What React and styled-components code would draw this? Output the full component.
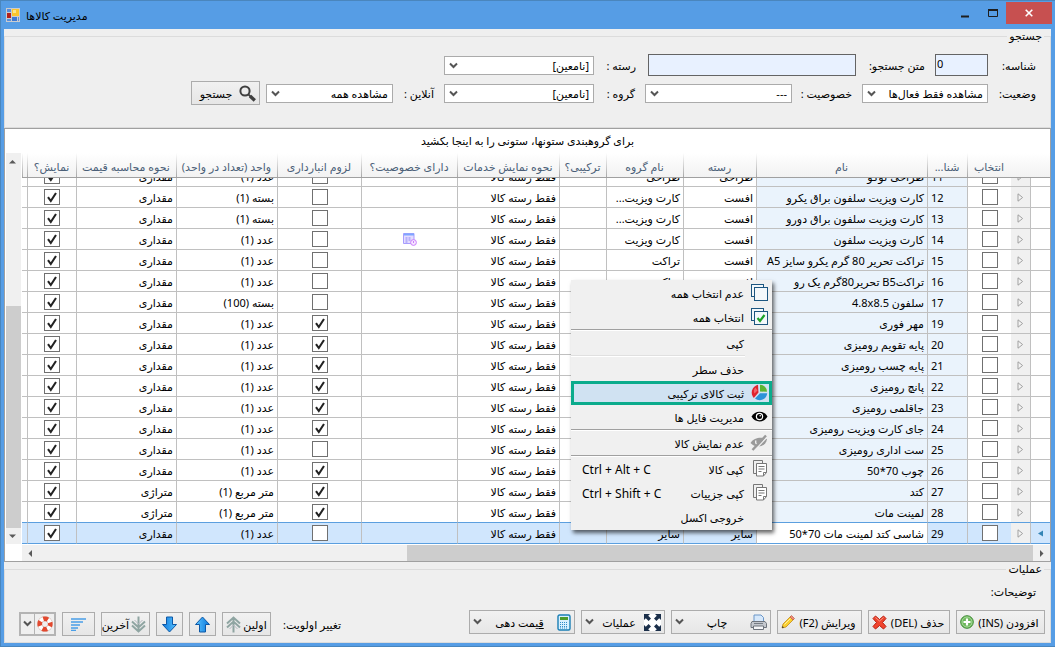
import React, { useState } from 'react';
import styled, { createGlobalStyle, css } from 'styled-components';

const GlobalStyle = createGlobalStyle`
  * {
    box-sizing: border-box;
  }
  body {
    margin: 0;
    overflow: hidden;
    font-family: 'Noto Sans', 'DejaVu Sans', sans-serif;
    font-size: 11px;
    color: #000000;
  }
  button, input, select {
    font: inherit;
    color: inherit;
  }
  svg {
    flex-shrink: 0;
  }
`;

const Window = styled.div`
  height: 100vh;
  display: flex;
  flex-direction: column;
  background-color: #569de5;
  border: 1px solid #4a86bd;
  border-right-width: 0;
  padding: 0 4px 3px 3px;
`;

const TitleBar = styled.header`
  height: 28px;
  flex-shrink: 0;
  display: flex;
  align-items: center;
  padding-left: 2px;
  margin-right: -1px;
`;

const Title = styled.h1`
  flex: 1;
  margin: 0 0 0 6px;
  font-size: 11px;
  font-weight: 400;
`;

const WindowButton = styled.button`
  width: ${(props) => (props.$close ? '46px' : '27px')};
  height: 22px;
  align-self: flex-start;
  display: flex;
  align-items: center;
  justify-content: center;
  padding: 0;
  border: none;
  margin-top: 1px;
  background-color: ${(props) => (props.$close ? '#c75050' : 'transparent')};
`;

const Content = styled.main`
  flex: 1;
  min-height: 0;
  display: flex;
  flex-direction: column;
  direction: rtl;
  background-color: #efefef;
`;

const Group = styled.fieldset`
  flex-shrink: 0;
  min-width: 0;
  margin: 0;
  padding: 8px 14px ${(props) => props.$bottom};
  border: 1px solid #dcdcdc;
`;

const Legend = styled.legend`
  height: 14px;
  line-height: 14px;
  padding: 0 2px;
  margin-right: -8px;
`;

const FieldRow = styled.div`
  display: flex;
  align-items: center;
  gap: 10px;
  height: 28px;
`;

const Field = styled.div`
  display: flex;
  align-items: center;
  gap: ${(props) => props.$gap || '0'};
`;

const Label = styled.label`
  width: ${(props) => props.$width};
  white-space: nowrap;
`;

const TextInput = styled.input`
  width: ${(props) => props.$width};
  height: 22px;
  padding: 0 1px 3px;
  border: 1px solid #646464;
  border-radius: 0;
  background-color: #e8f1ff;
  text-align: left;
  direction: ltr;
`;

const SelectBox = styled.div`
  position: relative;
  width: ${(props) => props.$width};
  height: 19px;

  svg {
    position: absolute;
    left: 5px;
    top: 6px;
    pointer-events: none;
  }
`;

const Select = styled.select`
  width: 100%;
  height: 100%;
  padding: 0 4px 0 16px;
  appearance: none;
  border: 1px solid #ababab;
  border-radius: 0;
  background-color: #ffffff;
`;

const Button = styled.button`
  width: ${(props) => props.$width};
  height: 24px;
  display: flex;
  align-items: center;
  justify-content: ${(props) => (props.$center ? 'center' : 'space-between')};
  gap: 2px;
  padding: 0 3px;
  border: 1px solid #acacac;
  background-image: linear-gradient(#f1f1f1, #e6e6e6);
  white-space: nowrap;
`;

const ButtonText = styled.span`
  flex: 1;
  text-align: center;
`;

const GridPanel = styled.section`
  position: relative;
  flex: 1;
  min-height: 0;
  display: flex;
  flex-direction: column;
  border: 1px solid #a0a0a0;
  background-color: #ffffff;
`;

const GroupHint = styled.div`
  height: 24px;
  line-height: 24px;
  flex-shrink: 0;
  text-align: center;
`;

const GridArea = styled.div`
  flex: 1;
  min-height: 0;
  display: flex;
`;

const GridMain = styled.div`
  flex: 1;
  min-width: 0;
  display: flex;
  flex-direction: column;
`;

const BodyView = styled.div`
  flex: 1;
  min-height: 0;
  overflow: hidden;
  display: flex;
  flex-direction: column;
  justify-content: flex-end;
`;

const Table = styled.table`
  width: 100%;
  table-layout: fixed;
  border-collapse: separate;
  border-spacing: 0;
`;

const HeadCell = styled.th`
  height: 25px;
  padding: 2px 0 0;
  overflow: hidden;
  white-space: nowrap;
  font-weight: 400;
  color: #4b5f78;
  border-bottom: 1px solid #a0a0a0;
  background: ${(props) =>
    props.$plain
      ? 'linear-gradient(#ffffff, #f2f2f2)'
      : 'linear-gradient(#ffffff, #a8a8a8) left / 1px 100% no-repeat, linear-gradient(#ffffff, #f2f2f2)'};
`;

const Row = styled.tr`
  background-color: ${(props) => (props.$selected ? '#d0e6fd' : '#ffffff')};
`;

const Cell = styled.td`
  height: 21px;
  padding: 0 3px;
  overflow: hidden;
  white-space: nowrap;
  border-left: ${(props) => (props.$noLine ? 'none' : '1px solid #c0c0c0')};
  border-bottom: 1px solid ${(props) => (props.$line ? '#5b9fdf' : '#c0c0c0')};
  text-align: ${(props) => props.$align || 'right'};
  ${(props) =>
    props.$tint &&
    css`
      background-color: ${props.$tint};
    `}

  svg {
    display: block;
    margin: 0 auto;
  }
`;

const CheckBox = styled.input`
  appearance: none;
  display: block;
  width: 16px;
  height: 16px;
  margin: 0 auto;
  border: 1px solid #707070;
  background-color: #ffffff;

  &:checked {
    background-image: url("data:image/svg+xml,%3Csvg xmlns='http://www.w3.org/2000/svg' viewBox='0 0 14 14'%3E%3Cpath d='M3 7.2 5.8 11 11 3' fill='none' stroke='%23222' stroke-width='2.1'/%3E%3C/svg%3E");
  }
`;

const VScroll = styled.div`
  width: 15px;
  margin: 0 1px 17px;
  display: flex;
  flex-direction: column;
  background-color: #f0f0f0;
`;

const HScroll = styled.div`
  height: 16px;
  margin-top: 1px;
  flex-shrink: 0;
  display: flex;
  direction: ltr;
  background-color: #f0f0f0;
`;

const ScrollButton = styled.button`
  width: 17px;
  height: 16px;
  flex-shrink: 0;
  display: flex;
  align-items: center;
  justify-content: center;
  padding: 0;
  border: none;
  background: none;
`;

const Space = styled.div`
  flex: ${(props) => props.$grow};
`;

const Thumb = styled.div`
  flex: ${(props) => props.$grow};
  background-color: #cdcdcd;
`;

const Menu = styled.ul`
  position: absolute;
  left: 566px;
  top: 151px;
  width: 201px;
  margin: 0;
  padding: 1px 0;
  list-style: none;
  background-color: #f0f0f0;
  box-shadow: 2px 3px 4px rgba(0, 0, 0, 0.6);
`;

const MenuSeparator = styled.li`
  height: 2px;
  margin-right: ${(props) => (props.$light ? '27px' : '0')};
  border-top: 1px solid ${(props) => (props.$light ? '#e0e0e0' : '#a0a0a0')};
  border-bottom: 1px solid #ffffff;
`;

const MenuButton = styled.button`
  width: 100%;
  height: 24px;
  display: flex;
  align-items: center;
  padding: 0 4px 0 11px;
  border: none;
  background: none;
  ${(props) =>
    props.$active &&
    css`
      background-color: #d0e2f2;
      outline: 3px solid #0bab8c;
      outline-offset: -3px;
    `}
`;

const MenuIcon = styled.span`
  width: 18px;
  height: 18px;
  margin-left: 6px;
`;

const MenuText = styled.span`
  flex: 1;
  text-align: right;
`;

const Shortcut = styled.kbd`
  font-family: inherit;
  font-size: 12px;
  direction: ltr;
`;

const Notes = styled.p`
  height: 16px;
  line-height: 16px;
  margin: 0 0 9px;
`;

const Toolbar = styled.div`
  display: flex;
  align-items: center;
  gap: 6px;
  height: 26px;
  margin: 0 -9px;
`;

const ToolSpace = styled.div`
  flex: 1;
`;

const OrderTools = styled.div`
  display: flex;
  align-items: center;
  gap: 6px;
  padding-top: 4px;
  padding-left: 9px;
`;

const OrderLabel = styled.span`
  margin-left: 6px;
`;

const SplitButton = styled.div`
  display: flex;
  width: 37px;
  height: 24px;
  border: 2px solid #b4b4b4;

  button {
    padding: 0;
    border: none;
    background-color: #efefef;
    display: flex;
    align-items: center;
    justify-content: center;
    height: 20px;
  }
  button:first-child {
    flex: 1;
  }
  button:last-child {
    width: 14px;
    border-right: 1px solid #b4b4b4;
  }
`;

const Chevron = () => (
  <svg width='9' height='8' viewBox='0 0 9 8'>
    <path d='M1 1.5 4.5 5 8 1.5' fill='none' stroke='#555' strokeWidth='2' />
  </svg>
);

const AppIcon = () => (
  <svg width='14' height='14' viewBox='0 0 14 14'>
    <rect width='14' height='14' fill='#c9ccd0' />
    <rect x='1' y='1' width='4' height='3' fill='#5a8edb' />
    <rect x='1' y='5' width='4' height='5' fill='#b3201c' />
    <rect x='6' y='1' width='7' height='7' fill='#fbc52c' />
    <rect x='7' y='2' width='3' height='3' fill='#fde58a' />
    <rect x='1' y='11' width='4' height='2' fill='#5a8edb' />
    <rect x='6' y='9' width='5' height='4' fill='#3d79d4' />
    <rect x='12' y='9' width='1' height='4' fill='#5a8edb' />
  </svg>
);

const SearchIcon = () => (
  <svg width='17' height='17' viewBox='0 0 17 17' fill='none' stroke='#3f3f3f'>
    <circle cx='6' cy='6' r='4.6' strokeWidth='2' />
    <path d='m9.6 9.6 1.8 1.8' strokeWidth='2' />
    <path d='m11 11 4.8 4.4' strokeWidth='3.4' />
  </svg>
);

const RowArrow = () => (
  <svg width='7' height='9' viewBox='0 0 7 9'>
    <path d='M1 .8v7.4L5.6 4.5z' fill='#f4f4f4' stroke='#a0a0a0' />
  </svg>
);

const FocusArrow = () => (
  <svg width='7' height='7' viewBox='0 0 7 7'>
    <path d='M6 .5v6L1 3.5z' fill='#3585b5' />
  </svg>
);

const FeatureIcon = () => (
  <svg width='14' height='13' viewBox='0 0 14 13' fill='none'>
    <path d='M.5 .5h10.5v10h-10.5z' fill='#e4dcff' stroke='#a79dff' />
    <path d='M1 1.5h10' stroke='#7ea6ff' strokeWidth='2' />
    <path d='M2.5 5h2m1 0h2m-5 2h2m1 0h2m-5 2h2' stroke='#8b86f5' />
    <circle cx='10.5' cy='9.5' r='2.9' fill='#f7e6ff' stroke='#c97dfb' />
    <path d='M10.5 8v2' stroke='#c97dfb' />
  </svg>
);

const ScrollArrow = ({ d }) => (
  <svg width='9' height='9' viewBox='0 0 9 9'>
    <path d={d} fill='#5a5a5a' />
  </svg>
);

const PagesIcon = ({ checked }) => (
  <svg width='17' height='17' viewBox='0 0 17 17' fill='#f4f8fb' stroke='#1d5680'>
    <rect x='.5' y='.5' width='12' height='12' />
    <rect x='3.500' y='3.500' width='13' height='13' />
    {checked && <path d='m6.5 10 2.5 3 4.5-6' fill='none' stroke='#1ea32a' strokeWidth='2.2' />}
  </svg>
);

const PieIcon = () => (
  <svg width='17' height='17' viewBox='0 0 17 17'>
    <path d='M7.5 8.5 2.8 14A8 8 0 0 1 7 .8z' fill='#e0232e' />
    <path d='M9 7.5V.8a7 7 0 0 1 7 7z' fill='#5cb531' />
    <path d='M9 9.2h7.200a7.500 7.500 0 0 1-12.200 5.300z' fill='#2d93d8' />
    <path d='M4.5 3.5c-2 2-2 4-1 6l3-3z' fill='#f2636b' />
  </svg>
);

const EyeIcon = () => (
  <svg width='17' height='17' viewBox='0 0 17 17'>
    <path d='M.5 8.5C4 2 13 2 16.5 8.5 13 15 4 15 .5 8.5z' fill='#000' />
    <circle cx='8.5' cy='8.5' r='3.7' fill='#fff' />
    <circle cx='8.5' cy='8.5' r='2.5' fill='#000' />
    <circle cx='9.2' cy='7.8' r='.8' fill='#fff' />
  </svg>
);

const EyeOffIcon = () => (
  <svg width='18' height='17' viewBox='0 0 18 17' fill='none' stroke='#9a9a9a'>
    <path d='M.5 9C4 3 12 3 17 5 16 13 6 15 .5 9z' fill='#9a9a9a' stroke='none' />
    <path d='M6 6.5c-1 2 0 4 2 4' stroke='#f0f0f0' strokeWidth='1.4' />
    <path d='M4.500 16.500 17.500 2.500' stroke='#f0f0f0' strokeWidth='1.5' />
    <path d='M2.500 16 16 1.500' strokeWidth='2.4' />
  </svg>
);

const CopyIcon = () => (
  <svg width='17' height='17' viewBox='0 0 17 17' fill='#fff' stroke='#777'>
    <path d='M5.5 13.500h-3v-13h9v3' fill='none' />
    <path d='M5.5 3.500h10v9l-3 3.500h-7z' />
    <path d='M12.500 16v-3.500h3M7.500 6.500h6m-6 2.500h6m-6 2.500h3' fill='none' />
  </svg>
);

const AddIcon = () => (
  <svg width='14' height='14' viewBox='0 0 14 14'>
    <circle cx='7' cy='7' r='6.3' fill='#6cb65a' stroke='#3f8a36' />
    <circle cx='7' cy='7' r='5' fill='none' stroke='#a8dc9c' />
    <path d='M7 3.5v7M3.5 7h7' stroke='#fff' strokeWidth='2.2' />
  </svg>
);

const DeleteIcon = () => (
  <svg width='15' height='15' viewBox='0 0 15 15'>
    <path
      d='M3.5 1 7.5 4.5 11.5 1 14 3.5 10.5 7.5 14 11.5 11.5 14 7.5 10.5 3.5 14 1 11.5 4.5 7.5 1 3.5z'
      fill='#f0442e'
      stroke='#b81e10'
    />
    <path d='m3.5 2.5 4 3.5 4-3.5' fill='none' stroke='#fa9a86' />
  </svg>
);

const EditIcon = () => (
  <svg width='14' height='14' viewBox='0 0 14 14'>
    <path d='m1 13 1-4 7.5-7.5 3 3L5 12z' fill='#fbd02e' stroke='#c08a1c' strokeWidth='.8' />
    <path d='m9 2 1.5-1.5 3 3L12 5z' fill='#f08a7a' stroke='#b0503c' strokeWidth='.6' />
    <path d='m1 13 .5-2 1.5 1.5z' fill='#333' />
    <path d='m3.5 9.5 6-6' stroke='#fff0a0' />
  </svg>
);

const PrinterIcon = () => (
  <svg width='17' height='17' viewBox='0 0 17 17'>
    <path d='M4 8V1h7l2.5 2.5V8z' fill='#d6e8fb' stroke='#6a96c8' />
    <path d='M2 7.5h13l1.500 2v4h-15.500v-4z' fill='#c4c8ce' stroke='#6e747c' />
    <path d='M3.500 12h10v3.500h-10z' fill='#f6f7f9' stroke='#6e747c' />
    <path d='M4 9.5h9' stroke='#767c84' />
  </svg>
);

const ExpandIcon = () => (
  <svg width='17' height='17' viewBox='0 0 17 17'>
    <rect width='17' height='17' fill='#ffffff' />
    <path
      d='M0 0h6L4.2 1.800 7 4.600 4.600 7 1.800 4.200 0 6zM17 0v6l-1.800-1.800L12.400 7 10 4.600l2.800-2.800L11 0zM0 17v-6l1.800 1.800L4.600 10 7 12.400l-2.800 2.800L6 17zM17 17h-6l1.800-1.800L10 12.400 12.400 10l2.800 2.800L17 11z'
      fill='#1b2f4a'
    />
  </svg>
);

const CalcIcon = () => (
  <svg width='14' height='17' viewBox='0 0 14 17'>
    <rect x='1' y='1' width='12' height='15' rx='1.5' fill='#d8f0ff' stroke='#1a7fb5' strokeWidth='1.4' />
    <rect x='3' y='3' width='8' height='3' fill='#4c9c2c' />
    <path d='M3 8.5h8M3 10.5h8M3 12.5h8M3 14h8' stroke='#2f8cc8' strokeDasharray='1 1' />
  </svg>
);

const DoubleUpIcon = ({ down }) => (
  <svg width='15' height='17' viewBox='0 0 15 17'>
    <g transform={down ? 'rotate(180 7.5 8.5)' : undefined} fill='none' stroke='#8fa5a2' strokeWidth='2'>
      <path d='m1 7.5 6.500-6 6.500 6M1 11.500l6.500-6 6.500 6M7.500 3v13.500' />
      <path d='M3.500 13l4-4 4 4' stroke='#b4b8c0' strokeWidth='1' />
    </g>
  </svg>
);

const BlueArrow = ({ down }) => (
  <svg width='17' height='17' viewBox='0 0 16 17'>
    <defs>
      <linearGradient id='blue' x1='0' x2='1'>
        <stop offset='0' stopColor='#5cc4ff' />
        <stop offset='1' stopColor='#0a78dc' />
      </linearGradient>
    </defs>
    <path
      transform={down ? 'rotate(180 8 8.5)' : undefined}
      d='M8 1 15 8.5h-4V16H5V8.5H1z'
      fill='url(#blue)'
      stroke='#0d58a6'
    />
  </svg>
);

const SortIcon = () => (
  <svg width='15' height='13' viewBox='0 0 15 13'>
    <path d='M0 1h15M0 4h12M0 7h9M0 10h7M0 12.500h5' stroke='#4a9fe8' strokeWidth='1.6' />
  </svg>
);

const HelpIcon = () => (
  <svg width='16' height='16' viewBox='0 0 16 16' fill='none'>
    <circle cx='8' cy='8' r='5.3' stroke='#d0b0a8' strokeWidth='5' />
    <circle cx='8' cy='8' r='5.3' stroke='#fff' strokeWidth='4' />
    <circle
      cx='8'
      cy='8'
      r='5.3'
      stroke='#e2492f'
      strokeWidth='4.6'
      strokeDasharray='4.8 3.525'
      strokeDashoffset='2.4'
    />
  </svg>
);

const columns = [
  { key: 'focus', width: 20, plain: true },
  { key: 'expand', width: 19, plain: true },
  { key: 'picked', width: 44, title: 'انتخاب' },
  { key: 'id', width: 40, title: 'شنا...' },
  { key: 'name', title: 'نام' },
  { key: 'category', width: 73, title: 'رسته' },
  { key: 'group', width: 77, title: 'نام گروه' },
  { key: 'combined', width: 47, title: 'ترکیبی؟' },
  { key: 'service', width: 102, title: 'نحوه نمایش خدمات' },
  { key: 'feature', width: 96, title: 'دارای خصوصیت؟' },
  { key: 'stock', width: 84, title: 'لزوم انبارداری' },
  { key: 'unit', width: 101, title: 'واحد (تعداد در واحد)' },
  { key: 'pricing', width: 100, title: 'نحوه محاسبه قیمت' },
  { key: 'visible', width: 49, title: 'نمایش؟' },
  { key: 'rest', width: 5 },
];

const products = [
  { id: 11, name: 'طراحی لوگو', category: 'طراحی', group: 'طراحی', unit: 'عدد (1)' },
  { id: 12, name: 'کارت ویزیت سلفون براق یکرو', category: 'افست', group: 'کارت ویزیت...', unit: 'بسته (1)' },
  { id: 13, name: 'کارت ویزیت سلفون براق دورو', category: 'افست', group: 'کارت ویزیت...', unit: 'بسته (1)' },
  { id: 14, name: 'کارت ویزیت سلفون', category: 'افست', group: 'کارت ویزیت', unit: 'عدد (1)', feature: true },
  { id: 15, name: 'تراکت تحریر 80 گرم یکرو سایز A5', category: 'افست', group: 'تراکت', unit: 'عدد (1)' },
  { id: 16, name: 'تراکتB5 تحریر80گرم یک رو', category: 'افست', group: 'تراکت', unit: 'عدد (1)' },
  { id: 17, name: 'سلفون 4.8x8.5', unit: 'بسته (100)' },
  { id: 19, name: 'مهر فوری', unit: 'عدد (1)', stock: true },
  { id: 20, name: 'پایه تقویم رومیزی', unit: 'عدد (1)', stock: true },
  { id: 21, name: 'پایه چسب رومیزی', unit: 'عدد (1)', stock: true },
  { id: 22, name: 'پانچ رومیزی', unit: 'عدد (1)', stock: true },
  { id: 23, name: 'جاقلمی رومیزی', unit: 'عدد (1)', stock: true },
  { id: 24, name: 'جای کارت ویزیت رومیزی', unit: 'عدد (1)', stock: true },
  { id: 25, name: 'ست اداری رومیزی', unit: 'عدد (1)' },
  { id: 26, name: 'چوب 70*50', unit: 'عدد (1)', stock: true },
  { id: 27, name: 'کتد', unit: 'متر مربع (1)', pricing: 'متراژی', stock: true },
  { id: 28, name: 'لمینت مات', unit: 'متر مربع (1)', pricing: 'متراژی', stock: true },
  { id: 29, name: 'شاسی کتد لمینت مات 70*50', category: 'سایر', group: 'سایر', unit: 'عدد (1)' },
];

const menuItems = [
  { text: 'عدم انتخاب همه', icon: <PagesIcon /> },
  { text: 'انتخاب همه', icon: <PagesIcon checked /> },
  { separator: true },
  { text: 'کپی' },
  { separator: true, light: true },
  { text: 'حذف سطر' },
  { text: 'ثبت کالای ترکیبی', icon: <PieIcon />, active: true },
  { text: 'مدیریت فایل ها', icon: <EyeIcon /> },
  { separator: true },
  { text: 'عدم نمایش کالا', icon: <EyeOffIcon /> },
  { separator: true },
  { text: 'کپی کالا', icon: <CopyIcon />, shortcut: 'Ctrl + Alt + C' },
  { text: 'کپی جزییات', icon: <CopyIcon />, shortcut: 'Ctrl + Shift + C' },
  { text: 'خروجی اکسل' },
];

const Columns = () => (
  <colgroup>
    {columns.map((c) => (
      <col key={c.key} width={c.width} />
    ))}
  </colgroup>
);

const Dropdown = ({ id, label, labelWidth, width, value }) => (
  <Field>
    <Label htmlFor={id} $width={labelWidth}>
      {label}
    </Label>
    <SelectBox $width={width}>
      <Select id={id}>
        <option>{value}</option>
      </Select>
      <Chevron />
    </SelectBox>
  </Field>
);

const SearchGroup = () => (
  <Group $bottom='20px'>
    <Legend>جستجو</Legend>
    <FieldRow>
      <Field>
        <Label htmlFor='code' $width='48px'>
          شناسه:
        </Label>
        <TextInput id='code' $width='53px' defaultValue='0' />
      </Field>
      <Field $gap='12px'>
        <Field>
          <Label htmlFor='query' $width='69px'>
            متن جستجو:
          </Label>
          <TextInput id='query' $width='208px' />
        </Field>
        <Dropdown id='category' label='رسته :' labelWidth='42px' width='150px' value='[نامعین]' />
      </Field>
    </FieldRow>
    <FieldRow>
      <Dropdown id='status' label='وضعیت:' labelWidth='48px' width='126px' value='مشاهده فقط فعال‌ها' />
      <Dropdown id='feature' label='خصوصیت :' labelWidth='60px' width='147px' value='---' />
      <Dropdown id='group' label='گروه :' labelWidth='41px' width='150px' value='[نامعین]' />
      <Field $gap='6px'>
        <Dropdown id='online' label='آنلاین :' labelWidth='41px' width='127px' value='مشاهده همه' />
        <Button type='button' $width='69px'>
          <SearchIcon />
          <ButtonText>جستجو</ButtonText>
        </Button>
      </Field>
    </FieldRow>
  </Group>
);

const ProductRow = ({ product, selected, line, picked, onPick }) => {
  const tint = selected ? undefined : '#eaf3fc';
  return (
    <Row $selected={selected}>
      <Cell $line={line}>{selected && <FocusArrow />}</Cell>
      <Cell $line={line} $noLine $tint='#f0f0f0'>
        <RowArrow />
      </Cell>
      <Cell $line={line}>
        <CheckBox type='checkbox' aria-label={product.name} checked={picked} onChange={onPick} />
      </Cell>
      <Cell $line={line} $align='left' $tint={tint}>
        {product.id}
      </Cell>
      <Cell $line={line} $tint={selected ? '#ffffff' : tint}>
        {product.name}
      </Cell>
      <Cell $line={line}>{product.category}</Cell>
      <Cell $line={line}>{product.group}</Cell>
      <Cell $line={line} />
      <Cell $line={line}>فقط رسته کالا</Cell>
      <Cell $line={line}>{product.feature && <FeatureIcon />}</Cell>
      <Cell $line={line}>
        <CheckBox type='checkbox' aria-label='لزوم انبارداری' defaultChecked={product.stock} />
      </Cell>
      <Cell $line={line}>{product.unit}</Cell>
      <Cell $line={line}>{product.pricing || 'مقداری'}</Cell>
      <Cell $line={line}>
        <CheckBox type='checkbox' aria-label='نمایش؟' defaultChecked />
      </Cell>
      <Cell $line={line} $noLine />
    </Row>
  );
};

const ContextMenu = () => (
  <Menu>
    {menuItems.map((item, i) =>
      item.separator ? (
        <MenuSeparator key={i} $light={item.light} />
      ) : (
        <li key={i}>
          <MenuButton type='button' $active={item.active}>
            <MenuIcon>{item.icon}</MenuIcon>
            <MenuText>{item.text}</MenuText>
            {item.shortcut && <Shortcut>{item.shortcut}</Shortcut>}
          </MenuButton>
        </li>
      ),
    )}
  </Menu>
);

const ProductGrid = () => {
  const [selectedId] = useState(29);
  const [pickedIds, setPickedIds] = useState([]);
  const selectedIndex = products.findIndex((p) => p.id === selectedId);

  const onPick = (id) => {
    setPickedIds(pickedIds.includes(id) ? pickedIds.filter((p) => p !== id) : [...pickedIds, id]);
  };

  return (
    <GridPanel>
      <GroupHint>برای گروهبندی ستونها، ستونی را به اینجا بکشید</GroupHint>
      <GridArea>
        <GridMain>
          <Table>
            <Columns />
            <thead>
              <tr>
                {columns.map((c) => (
                  <HeadCell key={c.key} $plain={c.plain}>
                    {c.title}
                  </HeadCell>
                ))}
              </tr>
            </thead>
          </Table>
          <BodyView>
            <Table>
              <Columns />
              <tbody>
                {products.map((p, i) => (
                  <ProductRow
                    key={p.id}
                    product={p}
                    selected={p.id === selectedId}
                    line={i === selectedIndex || i === selectedIndex - 1}
                    picked={pickedIds.includes(p.id)}
                    onPick={() => onPick(p.id)}
                  />
                ))}
              </tbody>
            </Table>
          </BodyView>
          <HScroll>
            <ScrollButton type='button'>
              <ScrollArrow d='M6 1v7L2.5 4.5z' />
            </ScrollButton>
            <Space $grow={368} />
            <Thumb $grow={625} />
            <ScrollButton type='button'>
              <ScrollArrow d='M3 1v7l3.5-3.5z' />
            </ScrollButton>
          </HScroll>
        </GridMain>
        <VScroll>
          <ScrollButton type='button'>
            <ScrollArrow d='M1 6.5h7L4.5 3z' />
          </ScrollButton>
          <Space $grow={136} />
          <Thumb $grow={220} />
          <ScrollButton type='button'>
            <ScrollArrow d='M1 2.5h7L4.5 6z' />
          </ScrollButton>
        </VScroll>
      </GridArea>
      <ContextMenu />
    </GridPanel>
  );
};

const ActionsGroup = () => (
  <Group $bottom='7px'>
    <Legend>عملیات</Legend>
    <Notes>توضیحات:</Notes>
    <Toolbar>
      <Button type='button' $width='89px'>
        <ButtonText>افزودن (INS)</ButtonText>
        <AddIcon />
      </Button>
      <Button type='button' $width='82px'>
        <ButtonText>حذف (DEL)</ButtonText>
        <DeleteIcon />
      </Button>
      <Button type='button' $width='85px'>
        <ButtonText>ویرایش (F2)</ButtonText>
        <EditIcon />
      </Button>
      <Button type='button' $width='100px'>
        <PrinterIcon />
        <ButtonText>چاپ</ButtonText>
        <Chevron />
      </Button>
      <Button type='button' $width='84px'>
        <ExpandIcon />
        <ButtonText>عملیات</ButtonText>
        <Chevron />
      </Button>
      <Button type='button' $width='106px'>
        <CalcIcon />
        <ButtonText>
          <u>ق</u>یمت دهی
        </ButtonText>
        <Chevron />
      </Button>
      <ToolSpace />
      <OrderTools>
        <OrderLabel>تغییر اولویت:</OrderLabel>
        <Button type='button' $width='49px'>
          <ButtonText>اولین</ButtonText>
          <DoubleUpIcon />
        </Button>
        <Button type='button' $width='27px' $center>
          <BlueArrow />
        </Button>
        <Button type='button' $width='27px' $center>
          <BlueArrow down />
        </Button>
        <Button type='button' $width='49px'>
          <DoubleUpIcon down />
          <ButtonText>آخرین</ButtonText>
        </Button>
        <Button type='button' $width='33px' $center>
          <SortIcon />
        </Button>
        <SplitButton>
          <button type='button' aria-label='راهنما'>
            <HelpIcon />
          </button>
          <button type='button'>
            <Chevron />
          </button>
        </SplitButton>
      </OrderTools>
    </Toolbar>
  </Group>
);

const App = () => {
  return (
    <>
      <GlobalStyle />
      <Window>
        <TitleBar>
          <AppIcon />
          <Title>مدیریت کالاها</Title>
          <WindowButton type='button'>
            <svg width='9' height='9' viewBox='0 0 9 9'>
              <path d='M0 7.5h8' stroke='#1e1e1e' strokeWidth='2' />
            </svg>
          </WindowButton>
          <WindowButton type='button'>
            <svg width='10' height='8' viewBox='0 0 10 8'>
              <path d='M.5 0v7.5h9V0' fill='none' stroke='#1e1e1e' />
              <path d='M0 1h10' stroke='#1e1e1e' strokeWidth='2' />
            </svg>
          </WindowButton>
          <WindowButton type='button' $close>
            <svg width='8' height='8' viewBox='0 0 8 8'>
              <path d='m.7.7 6.6 6.6m0-6.6L.7 7.3' stroke='#fff' strokeWidth='1.6' />
            </svg>
          </WindowButton>
        </TitleBar>
        <Content>
          <SearchGroup />
          <ProductGrid />
          <ActionsGroup />
        </Content>
      </Window>
    </>
  );
};

export default App;
